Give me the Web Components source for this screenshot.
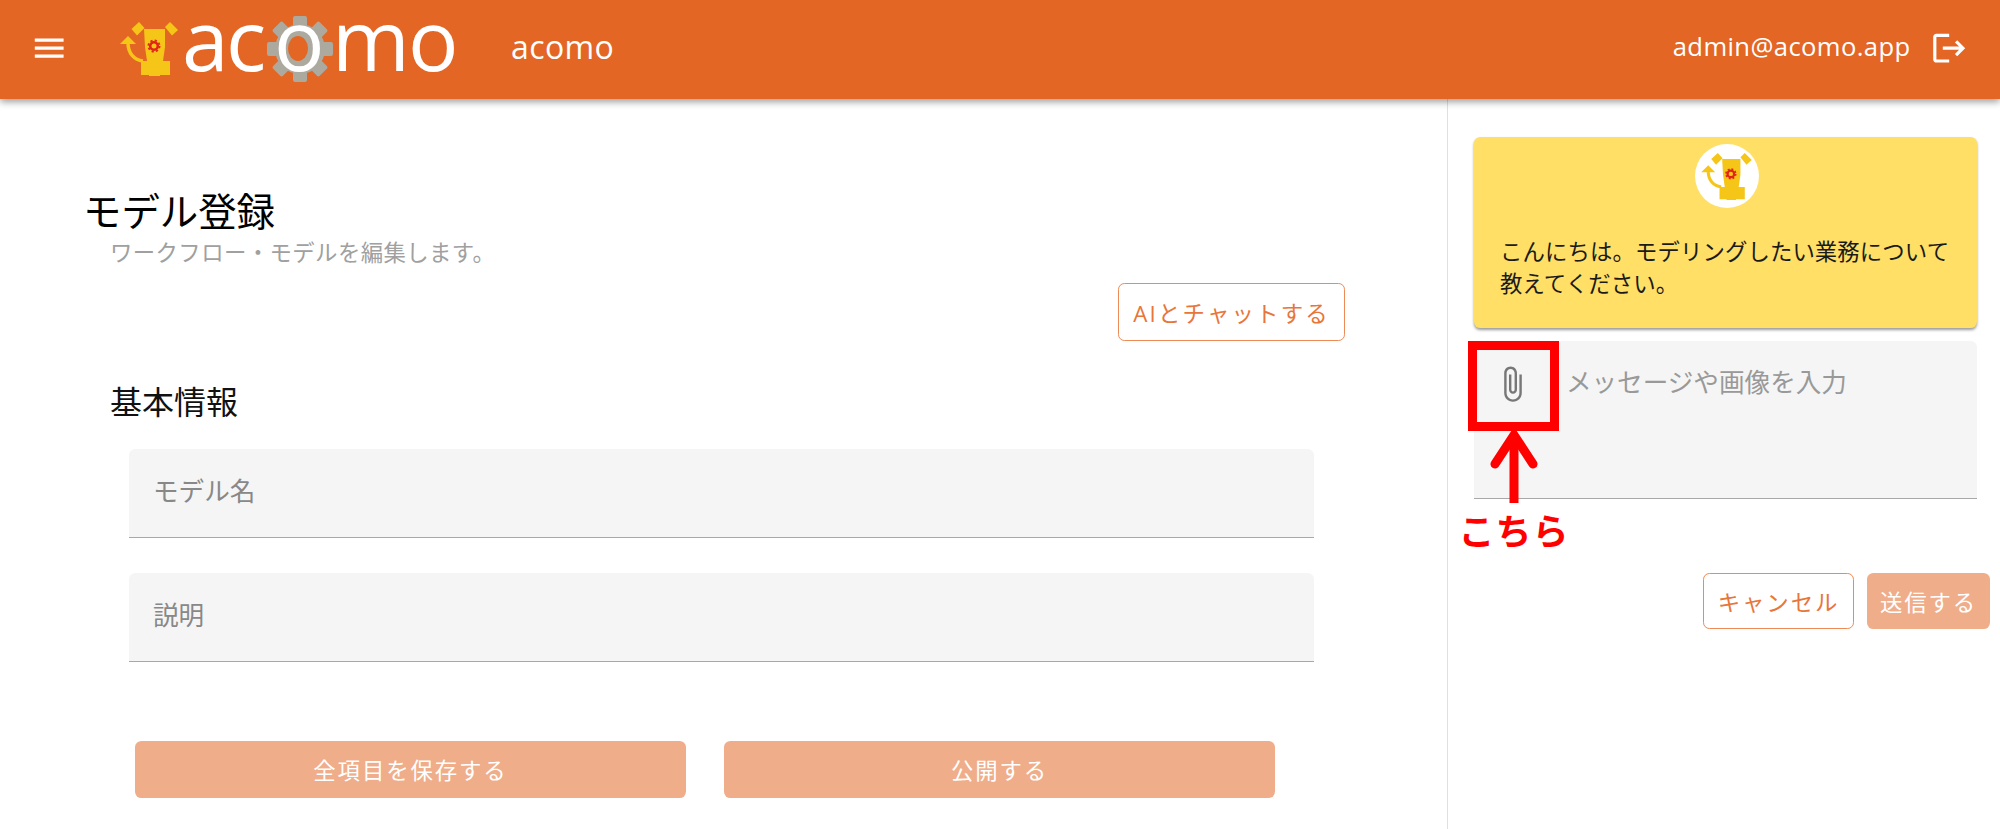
<!doctype html>
<html lang="ja">
	<head>
		<meta charset="UTF-8" />
		<title>acomo</title>
		<style>
			html, body {
				margin: 0;
				height: 829px;
				overflow: hidden;
				background: #fff;
				font-family: 'Open Sans', 'Noto Sans CJK JP', sans-serif;
			}
			main {
				display: grid;
				grid-template-columns: 1447px 1fr;
				height: 730px;
			}
		</style>

		<script>
			class AcomoMascot extends HTMLElement {
				#shadow = this.attachShadow({ mode: 'open' });

				connectedCallback() {
					this.#shadow.innerHTML = `
						<style>
							:host { display: block; width: 58px; height: 54px; }
							svg { display: block; width: 100%; height: 100%; }
						</style>
						<svg viewBox="120 21 58 54" fill="#f5c518">
							<polygon points="139,21 144.5,27 137,34.5 131.5,28" />
							<polygon points="170,21 178,29 172,34.5 165,26" />
							<polygon points="144,28 165,28 165,46 163,60 170,60 170,74 160,74 160,76 149,76 149,74 141,74 141,60 147,60 145,46" />
							<polygon points="128,35 120,43 136,43" />
							<path d="M128 42c0 10 6 17 15 18" fill="none" stroke="#f5c518" stroke-width="3.5" />
							<circle cx="154" cy="45" r="3.8" fill="none" stroke="#e2231a" stroke-width="2.6" />
							<circle cx="154" cy="45" r="5.6" fill="none" stroke="#e2231a" stroke-width="1.8" stroke-dasharray="2.2 2.2" />
						</svg>
					`;
				}
			}

			class AcomoLogo extends HTMLElement {
				#shadow = this.attachShadow({ mode: 'open' });

				connectedCallback() {
					this.#shadow.innerHTML = `
						<style>
							:host { display: flex; align-items: center; gap: 2px; }
							svg { display: block; overflow: visible; }
							text { font-family: 'Open Sans', sans-serif; font-size: 84px; fill: #fff; }
						</style>
						<acomo-mascot></acomo-mascot>
						<svg width="280" height="68" viewBox="180 16 280 68">
							<g transform="translate(300 50)" fill="#aca99f">
								<circle r="25" />
								<rect x="-7" y="-33" width="14" height="66" rx="2" />
								<rect x="-7" y="-33" width="14" height="66" rx="2" transform="rotate(45)" />
								<rect x="-7" y="-33" width="14" height="66" rx="2" transform="rotate(90)" />
								<rect x="-7" y="-33" width="14" height="66" rx="2" transform="rotate(135)" />
								<ellipse cx="-2" cy="-0.5" rx="10" ry="12.5" fill="#e36624" />
							</g>
							<text x="182 226 274 332 408" y="72">acomo</text>
						</svg>
					`;
				}
			}

			class AppHeader extends HTMLElement {
				#shadow = this.attachShadow({ mode: 'open' });

				connectedCallback() {
					this.#shadow.innerHTML = `
						<style>
							:host {
								display: flex;
								align-items: center;
								position: relative;
								z-index: 1;
								box-sizing: border-box;
								height: 99px;
								padding: 0 32px 2px 30px;
								background: #e36624;
								color: #fff;
								box-shadow: 0 3px 7px rgba(0, 0, 0, 0.38);
							}
							svg { display: block; width: 38.4px; height: 38.4px; fill: #fff; }
							acomo-logo { margin-left: 51.6px; }
							.title { margin: 0 0 4px 51px; font-size: 32px; letter-spacing: 0.4px; flex: 1; }
							.user { margin: 0 19px 4px 0; font-size: 25.6px; letter-spacing: 0.4px; }
						</style>
						<svg viewBox="0 0 24 24"><path d="M3 18h18v-2H3v2zm0-5h18v-2H3v2zm0-7v2h18V6H3z" /></svg>
						<acomo-logo></acomo-logo>
						<span class="title">acomo</span>
						<span class="user">admin@acomo.app</span>
						<svg viewBox="0 0 24 24"><path d="m17 7-1.41 1.41L18.17 11H8v2h10.17l-2.58 2.58L17 17l5-5zM4 5h8V3H4c-1.1 0-2 .9-2 2v14c0 1.1.9 2 2 2h8v-2H4V5z" /></svg>
					`;
				}
			}

			class AppButton extends HTMLElement {
				#shadow = this.attachShadow({ mode: 'open' });

				connectedCallback() {
					this.#shadow.innerHTML = `
						<style>
							:host {
								display: inline-flex;
								align-items: center;
								justify-content: center;
								box-sizing: border-box;
								height: 57px;
								padding: 0 12px;
								border-radius: 6.4px;
								font-size: 22.4px;
								letter-spacing: 1.9px;
								white-space: nowrap;
							}
							:host([variant='outlined']) {
								border: 1.6px solid #ee8a55;
								color: #e8753a;
								background: #fff;
							}
							:host([variant='filled']) {
								background: #f0ad89;
								color: #fff;
							}
						</style>
						<slot></slot>
					`;
				}
			}

			class TextField extends HTMLElement {
				#shadow = this.attachShadow({ mode: 'open' });

				connectedCallback() {
					this.#shadow.innerHTML = `
						<style>
							:host {
								display: flex;
								align-items: center;
								box-sizing: border-box;
								height: 89px;
								padding: 0 24px 6px;
								background: #f5f5f5;
								border-bottom: 1.6px solid #a8a8a8;
								border-radius: 6.4px 6.4px 0 0;
								color: #888;
								font-size: 25.6px;
							}
						</style>
						<slot></slot>
					`;
				}
			}

			class ModelForm extends HTMLElement {
				#shadow = this.attachShadow({ mode: 'open' });

				connectedCallback() {
					this.#shadow.innerHTML = `
						<style>
							:host {
								display: block;
								padding: 89px 102px 0 84px;
							}
							h1 {
								margin: 0 0 0 -1px;
								font-size: 38.4px;
								line-height: 46px;
								font-weight: 400;
								color: #000;
							}
							p {
								margin: 3px 0 0 26px;
								font-size: 22.4px;
								line-height: 32px;
								letter-spacing: 0.4px;
								color: #a0a0a0;
							}
							.ai { display: flex; justify-content: flex-end; margin-top: 14px; }
							.ai app-button { height: 58px; width: 227px; letter-spacing: 2.2px; }
							h2 {
								margin: 39px 0 25px 26px;
								font-size: 32px;
								line-height: 44px;
								font-weight: 400;
								color: #111;
							}
							.fields {
								display: flex;
								flex-direction: column;
								gap: 35px;
								margin: 0 31px 0 45px;
							}
							.actions {
								display: flex;
								gap: 38px;
								margin: 79px 70px 0 51px;
							}
							.actions app-button { flex: 1; }
						</style>
						<h1>モデル登録</h1>
						<p>ワークフロー・モデルを編集します。</p>
						<div class="ai"><app-button variant="outlined">AIとチャットする</app-button></div>
						<h2>基本情報</h2>
						<div class="fields">
							<text-field>モデル名</text-field>
							<text-field>説明</text-field>
						</div>
						<div class="actions">
							<app-button variant="filled">全項目を保存する</app-button>
							<app-button variant="filled">公開する</app-button>
						</div>
					`;
				}
			}

			class ChatBubble extends HTMLElement {
				#shadow = this.attachShadow({ mode: 'open' });

				connectedCallback() {
					this.#shadow.innerHTML = `
						<style>
							:host {
								display: block;
								box-sizing: border-box;
								height: 191px;
								padding: 7px 24px 0 26px;
								background: #ffdf66;
								border-radius: 6.4px;
								box-shadow: 0 2px 3px rgba(0, 0, 0, 0.4);
								color: #1a1a1a;
								font-size: 22.4px;
								line-height: 32px;
								letter-spacing: 0.1px;
							}
							.avatar {
								display: flex;
								align-items: center;
								justify-content: center;
								width: 64px;
								height: 64px;
								margin: 0 auto 28px;
								border-radius: 50%;
								background: #fff;
							}
							acomo-mascot { width: 51px; height: 47px; }
						</style>
						<div class="avatar"><acomo-mascot></acomo-mascot></div>
						<slot></slot>
					`;
				}
			}

			class CallOut extends HTMLElement {
				#shadow = this.attachShadow({ mode: 'open' });

				connectedCallback() {
					this.#shadow.innerHTML = `
						<style>
							:host {
								position: absolute;
								left: -6px;
								top: 0;
								width: 91px;
								color: #f00;
							}
							.box {
								box-sizing: border-box;
								height: 90px;
								border: 9px solid #f00;
							}
							svg { display: block; margin-left: 21.5px; }
							.label {
								position: absolute;
								left: -12px;
								top: 169px;
								width: 116px;
								text-align: center;
								font-size: 36px;
								line-height: 44px;
								letter-spacing: 1px;
								font-weight: 700;
								white-space: nowrap;
							}
						</style>
						<div class="box"></div>
						<svg width="48" height="72" viewBox="0 0 48 72" fill="none" stroke="#f00" stroke-width="9">
							<path d="M24 5V72" />
							<path d="M5 33L24 4l19 29" stroke-linecap="round" />
						</svg>
						<div class="label"><slot></slot></div>
					`;
				}
			}

			class ChatInput extends HTMLElement {
				#shadow = this.attachShadow({ mode: 'open' });

				connectedCallback() {
					this.#shadow.innerHTML = `
						<style>
							:host {
								display: flex;
								align-items: flex-start;
								position: relative;
								box-sizing: border-box;
								height: 158px;
								padding: 24px 0 0 19px;
								background: #f5f5f5;
								border-bottom: 1.6px solid #a8a8a8;
								border-radius: 6.4px 6.4px 0 0;
								color: #999;
								font-size: 25.6px;
								line-height: 36px;
							}
							svg { display: block; width: 38.4px; height: 38.4px; margin-right: 34.5px; fill: #777; }
						</style>
						<svg viewBox="0 0 24 24"><path d="M16.5 6v11.5c0 2.21-1.79 4-4 4s-4-1.79-4-4V5c0-1.38 1.12-2.5 2.5-2.5s2.5 1.12 2.5 2.5v10.5c0 .55-.45 1-1 1s-1-.45-1-1V6H10v9.5c0 1.38 1.12 2.5 2.5 2.5s2.5-1.12 2.5-2.5V5c0-2.21-1.79-4-4-4S7 2.79 7 5v12.5c0 3.04 2.46 5.5 5.5 5.5s5.5-2.46 5.5-5.5V6h-1.5z" /></svg>
						<slot></slot>
						<call-out>こちら</call-out>
					`;
				}
			}

			class ChatPanel extends HTMLElement {
				#shadow = this.attachShadow({ mode: 'open' });

				connectedCallback() {
					this.#shadow.innerHTML = `
						<style>
							:host {
								display: block;
								box-sizing: border-box;
								padding: 38px 23px 0 26px;
								border-left: 1.6px solid #e0e0e0;
							}
							chat-input { margin-top: 13px; }
							.actions {
								display: flex;
								justify-content: flex-end;
								gap: 13px;
								margin: 74px -13px 0 0;
							}
							.actions app-button { height: 56px; }
							.cancel { width: 151px; }
							.send { width: 123px; }
						</style>
						<chat-bubble>こんにちは。モデリングしたい業務について教えてください。</chat-bubble>
						<chat-input>メッセージや画像を入力</chat-input>
						<div class="actions">
							<app-button class="cancel" variant="outlined">キャンセル</app-button>
							<app-button class="send" variant="filled">送信する</app-button>
						</div>
					`;
				}
			}

			customElements.define('acomo-mascot', AcomoMascot);
			customElements.define('acomo-logo', AcomoLogo);
			customElements.define('app-header', AppHeader);
			customElements.define('app-button', AppButton);
			customElements.define('text-field', TextField);
			customElements.define('model-form', ModelForm);
			customElements.define('chat-bubble', ChatBubble);
			customElements.define('call-out', CallOut);
			customElements.define('chat-input', ChatInput);
			customElements.define('chat-panel', ChatPanel);
		</script>
	</head>

	<body>
		<app-header></app-header>
		<main>
			<model-form></model-form>
			<chat-panel></chat-panel>
		</main>
	</body>
</html>
